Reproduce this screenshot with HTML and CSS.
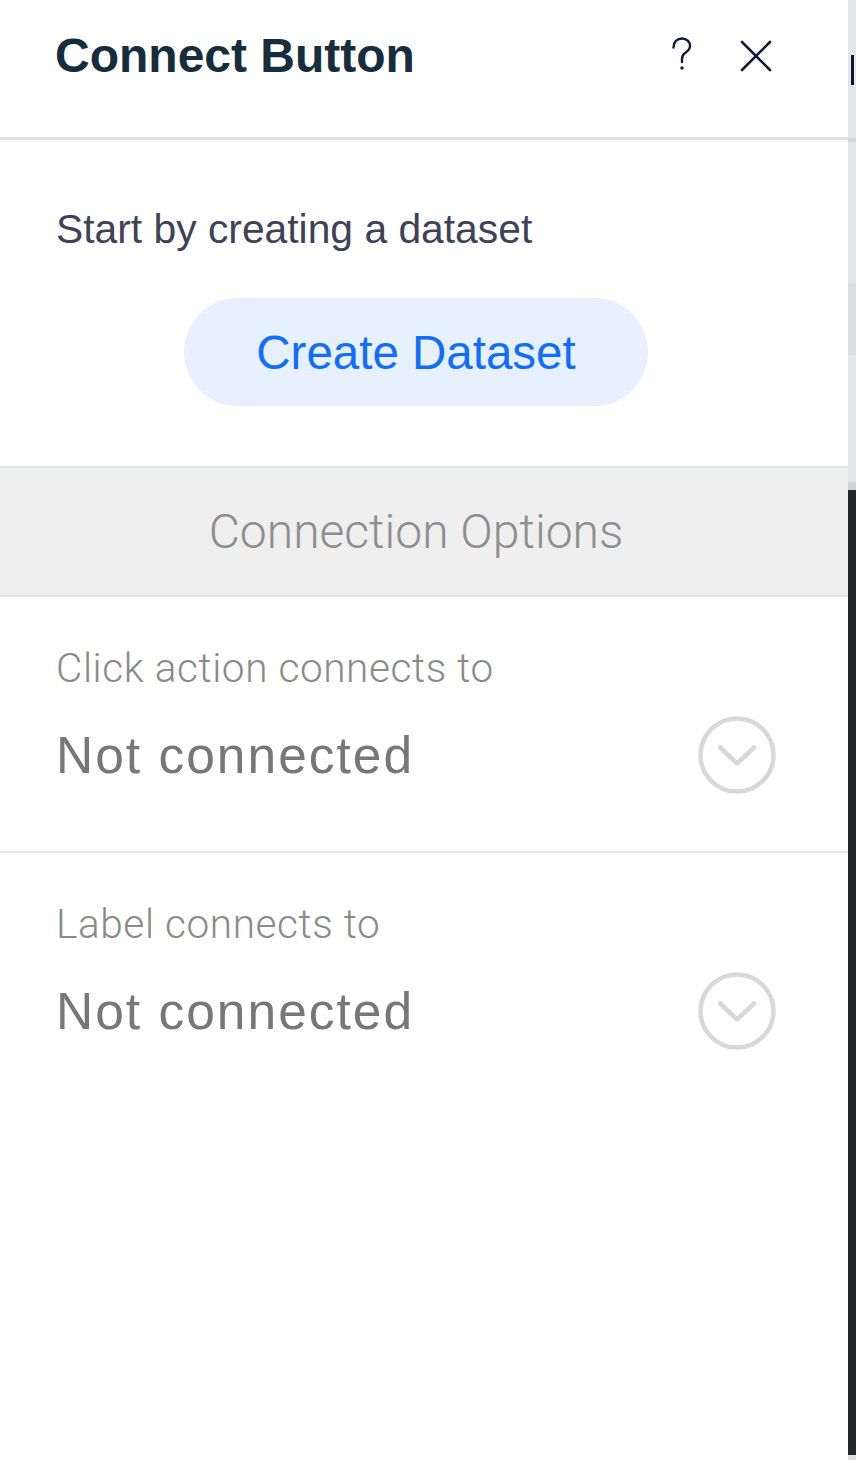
FILE: index.html
```html
<!DOCTYPE html>
<html>
<head>
<meta charset="utf-8">
<link rel="stylesheet" href="styles.css">
</head>
<body>
<div class="screen">
  <div class="panel">
    <header class="header">
      <h1 class="title">Connect Button</h1>
      <div class="actions">
        <svg class="icon-help" width="24" height="36" viewBox="0 0 24 36">
          <path d="M3.5 11.5 C3.5 6 7 2.5 12 2.5 C16.8 2.5 20 5.8 20 10 C20 13.6 17.6 15.2 15 17 C12.8 18.6 12 20 12 23 V26" fill="none" stroke="#0f1a33" stroke-width="2.4" stroke-linecap="round"/>
          <circle cx="12" cy="32" r="1.7" fill="#0f1a33"/>
        </svg>
        <svg class="icon-close" width="32" height="32" viewBox="0 0 32 32">
          <path d="M2 2 L30 30 M30 2 L2 30" stroke="#0f1a33" stroke-width="2.6" stroke-linecap="round"/>
        </svg>
      </div>
    </header>
    <section class="dataset">
      <p class="dataset-text">Start by creating a dataset</p>
      <button class="create-btn">Create Dataset</button>
    </section>
    <div class="options-band">Connection Options</div>
    <div class="conn-row">
      <div class="conn-label">Click action connects to</div>
      <div class="conn-value-row">
        <span class="conn-value">Not connected</span>
        <svg class="chev" width="80" height="80" viewBox="0 0 80 80">
          <circle cx="40" cy="40" r="36.5" fill="none" stroke="#d8d8d8" stroke-width="4.5"/>
          <path d="M23 32.5 L40 48.5 L57 32.5" fill="none" stroke="#d8d8d8" stroke-width="4.5" stroke-linecap="round" stroke-linejoin="round"/>
        </svg>
      </div>
    </div>
    <div class="conn-row last">
      <div class="conn-label">Label connects to</div>
      <div class="conn-value-row">
        <span class="conn-value">Not connected</span>
        <svg class="chev" width="80" height="80" viewBox="0 0 80 80">
          <circle cx="40" cy="40" r="36.5" fill="none" stroke="#d8d8d8" stroke-width="4.5"/>
          <path d="M23 32.5 L40 48.5 L57 32.5" fill="none" stroke="#d8d8d8" stroke-width="4.5" stroke-linecap="round" stroke-linejoin="round"/>
        </svg>
      </div>
    </div>
  </div>
  <div class="strip">
    <div class="s s-top"><span class="s-glyph"></span></div>
    <div class="s s-line"></div>
    <div class="s s-mid"></div>
    <div class="s s-darker"></div>
    <div class="s s-mid2"></div>
    <div class="s s-sep"></div>
    <div class="s s-dark"></div>
    <div class="s s-bottom"></div>
  </div>
</div>
</body>
</html>
```

FILE: styles.css
```css
html, body {
  margin: 0;
  padding: 0;
  background: #ffffff;
}
.screen {
  display: flex;
  width: 856px;
  height: 1460px;
  overflow: hidden;
}
.panel {
  width: 848px;
  flex: none;
  background: #ffffff;
  display: flex;
  flex-direction: column;
}
.header {
  height: 140px;
  box-sizing: border-box;
  padding: 28px 0 0 55px;
  display: flex;
  align-items: flex-start;
  justify-content: space-between;
  border-bottom: 3px solid #e3e3e3;
  flex: none;
}
.title {
  margin: 0;
  font-family: "Liberation Sans", Arial, sans-serif;
  font-weight: bold;
  font-size: 48px;
  line-height: 56px;
  color: #162d3d;
}
.actions {
  display: flex;
  align-items: flex-start;
  padding-right: 76px;
  padding-top: 8px;
}
.icon-help {
  display: block;
  margin-right: -2px;
}
.icon-close {
  display: block;
  margin-left: 48px;
  margin-top: 4px;
}
.dataset {
  flex: none;
  padding: 65px 16px 60px 0;
  display: flex;
  flex-direction: column;
  align-items: center;
  border-bottom: 2px solid #e0e4e8;
}
.dataset-text {
  align-self: flex-start;
  margin: 0 0 45px 56px;
  font-family: "Liberation Sans", Arial, sans-serif;
  font-size: 40.8px;
  line-height: 48px;
  color: #3e4257;
}
.create-btn {
  width: 464px;
  height: 108px;
  border: none;
  border-radius: 54px;
  background: #e7f0ff;
  color: #116dff;
  font-family: "Liberation Sans", Arial, sans-serif;
  font-size: 47.5px;
  padding: 0;
  display: flex;
  align-items: center;
  justify-content: center;
}
.options-band {
  flex: none;
  height: 129px;
  box-sizing: border-box;
  background: #efefef;
  border-bottom: 2px solid #dfe5eb;
  display: flex;
  align-items: center;
  justify-content: center;
  padding-right: 16px;
  font-family: Roboto, "Liberation Sans", sans-serif;
  font-weight: 300;
  font-size: 48px;
  color: #8e8e8e;
}
.conn-row {
  flex: none;
  height: 256px;
  box-sizing: border-box;
  padding: 48px 73px 0 56px;
  border-bottom: 2px solid #dfe5eb;
}
.conn-row.last {
  border-bottom: none;
}
.conn-label {
  font-family: Roboto, "Liberation Sans", sans-serif;
  font-weight: 300;
  font-size: 40.5px;
  line-height: 46px;
  letter-spacing: 0.6px;
  color: #8a8a8a;
}
.conn-value-row {
  margin-top: 24px;
  height: 80px;
  display: flex;
  align-items: center;
  justify-content: space-between;
}
.conn-value {
  font-family: "Liberation Sans", Arial, sans-serif;
  font-size: 51.5px;
  line-height: 60px;
  letter-spacing: 2px;
  color: #777777;
}
.chev {
  display: block;
  margin-right: -2px;
}
.strip {
  width: 8px;
  flex: none;
  display: flex;
  flex-direction: column;
}
.s { flex: none; }
.s-top {
  height: 138px;
  background: #e4e5e7;
  padding-top: 55px;
  box-sizing: border-box;
}
.s-glyph {
  display: block;
  width: 3px;
  height: 30px;
  margin-left: 3px;
  background: #0c1733;
}
.s-line { height: 4px; background: #d4d5d7; }
.s-mid { height: 141px; background: #e4e5e7; }
.s-darker { height: 72px; background: #dcdde0; }
.s-mid2 { height: 127px; background: #e4e5e7; }
.s-sep { height: 8px; background: #cfd0d0; }
.s-dark { height: 965px; background: #232628; }
.s-bottom { height: 5px; background: #e0e0e0; }
```
